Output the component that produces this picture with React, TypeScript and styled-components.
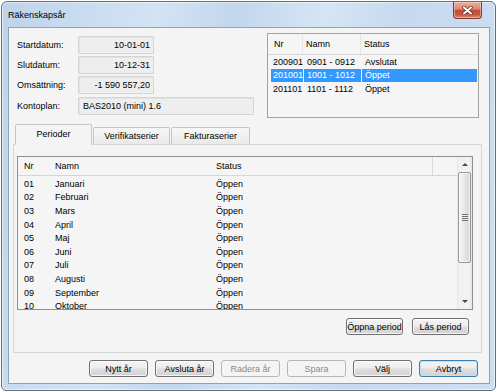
import React from "react";
import styled, { createGlobalStyle, css } from "styled-components";

const GlobalStyle = createGlobalStyle`
  html, body { margin: 0; padding: 0; background: #ffffff; }
  body {
    font-family: "Liberation Sans", Arial, sans-serif;
    font-size: 9px;
    color: #000;
  }
  * { box-sizing: border-box; }
`;

const Window = styled.div`
  margin: 1px;
  width: 495px;
  height: 390px;
  border: 1px solid #5d6f86;
  border-radius: 6px 6px 5px 5px;
  padding: 0 5px 6px 6px;
  display: flex;
  flex-direction: column;
  background: linear-gradient(100deg, #bed3ea 0%, #d3e3f4 28%, #c2d6ec 42%, #d6e5f5 58%, #c6d9ee 72%, #cddef1 100%);
  box-shadow: inset 0 0 0 1px rgba(255, 255, 255, 0.55);
`;

const TitleBar = styled.div`
  height: 25px;
  flex: none;
  display: flex;
  align-items: center;
  justify-content: space-between;
`;

const Title = styled.span`
  font-size: 9px;
  color: #000;
`;

const CloseButton = styled.div`
  align-self: flex-start;
  width: 29px;
  height: 17px;
  margin-right: 8px;
  border: 1px solid #7b3a2f;
  border-top: none;
  border-radius: 0 0 4px 4px;
  background: linear-gradient(#eab2a3 0%, #d98572 45%, #c44a33 52%, #c65a42 80%, #dc8d70 100%);
  box-shadow: inset 0 0 0 1px rgba(255, 220, 210, 0.5);
  display: flex;
  align-items: center;
  justify-content: center;
`;

const Client = styled.div`
  flex: 1;
  border: 1px solid #8ea2ba;
  background: #f4f4f4;
  display: flex;
  flex-direction: column;
  padding-top: 5px;
`;

const TopSection = styled.div`
  display: flex;
  justify-content: space-between;
  margin: 0 10px 0 8px;
  height: 85px;
`;

const Form = styled.div`
  display: flex;
  flex-direction: column;
  padding-top: 3px;
`;

const FormRow = styled.div<{ $gap: number }>`
  display: flex;
  align-items: center;
  margin-top: ${(p) => p.$gap}px;
`;

const Label = styled.span`
  width: 61px;
`;

const Field = styled.div<{ $wide?: boolean; $right?: boolean }>`
  width: ${(p) => (p.$wide ? 176 : 76)}px;
  height: 18px;
  border: 1px solid #d5d5d5;
  border-radius: 1px;
  background: #eeeeee;
  box-shadow: inset 1px 1px 0 #e2e2e2;
  display: flex;
  align-items: center;
  justify-content: ${(p) => (p.$right ? "flex-end" : "flex-start")};
  padding: 0 3px 0 4px;
`;

const YearList = styled.div`
  width: 212px;
  height: 85px;
  border: 1px solid #a3a3a3;
  background: #f5f5f5;
  display: flex;
  flex-direction: column;
`;

const YearHeader = styled.div`
  height: 21px;
  flex: none;
  border-bottom: 1px solid #d9d9d9;
  display: flex;
  padding-left: 3px;
`;

const YearCell = styled.div<{ $w?: number; $sel?: boolean; $head?: boolean }>`
  ${(p) => (p.$w ? css`width: ${p.$w}px; flex: none;` : css`flex: 1;`)}
  padding-left: 3px;
  display: flex;
  align-items: center;
  white-space: nowrap;
  ${(p) =>
    p.$head &&
    css`
      &:not(:last-child) {
        border-right: 1px solid #e6e6e6;
      }
    `}
  ${(p) =>
    p.$sel &&
    css`
      background: #3399ff;
      color: #fff;
    `}
`;

const YearRow = styled.div`
  height: 13.5px;
  display: flex;
  gap: 1px;
  padding-left: 3px;
  margin-right: 1px;
`;

const TabsRow = styled.div`
  display: flex;
  align-items: flex-end;
  gap: 1px;
  margin: 6px 0 -1px 6px;
  height: 21px;
  position: relative;
  z-index: 1;
`;

const Tab = styled.div<{ $active?: boolean; $w: number }>`
  width: ${(p) => p.$w}px;
  height: ${(p) => (p.$active ? 21 : 18)}px;
  border: 1px solid #c6c6c6;
  border-bottom: 1px solid ${(p) => (p.$active ? "#f4f4f4" : "#d6d6d6")};
  border-radius: 2px 2px 0 0;
  background: ${(p) => (p.$active ? "#f4f4f4" : "linear-gradient(#f7f7f7, #e9e9e9)")};
  display: flex;
  align-items: center;
  justify-content: center;
  padding-bottom: ${(p) => (p.$active ? 2 : 0)}px;
`;

const TabPanel = styled.div`
  margin: 0 7px 0 4px;
  height: 209px;
  border: 1px solid #d6d6d6;
  padding: 11px 8px 0 3px;
  display: flex;
  flex-direction: column;
`;

const ListView = styled.div`
  height: 154px;
  border: 1px solid #8f8f8f;
  background: #f5f5f5;
  display: flex;
`;

const ListContent = styled.div`
  flex: 1;
  overflow: hidden;
  display: flex;
  flex-direction: column;
`;

const ListHeader = styled.div`
  height: 19px;
  flex: none;
  border-bottom: 1px solid #d5d5d5;
  display: flex;
`;

const HeaderCell = styled.div<{ $w?: number; $sep?: string }>`
  ${(p) => (p.$w ? css`width: ${p.$w}px; flex: none;` : css`flex: 1;`)}
  padding-left: 6px;
  display: flex;
  align-items: center;
  border-right: 1px solid ${(p) => p.$sep ?? "transparent"};
`;

const Rows = styled.div`
  padding-top: 1px;
`;

const Row = styled.div`
  height: 13.6px;
  display: flex;
  align-items: center;
`;

const Cell = styled.div<{ $w: number }>`
  width: ${(p) => p.$w}px;
  flex: none;
  padding-left: 6px;
  white-space: nowrap;
`;

const Scrollbar = styled.div`
  width: 15px;
  flex: none;
  display: flex;
  flex-direction: column;
  background: linear-gradient(to right, #e4e4e4 0, #f2f2f2 2px, #f2f2f2 12px, #e4e4e4 15px);
`;

const ScrollArrow = styled.div<{ $down?: boolean }>`
  height: 15px;
  flex: none;
  display: flex;
  align-items: center;
  justify-content: center;
  &::after {
    content: "";
    width: 0;
    height: 0;
    border-left: 3px solid transparent;
    border-right: 3px solid transparent;
    ${(p) =>
      p.$down
        ? css`border-top: 3px solid #4a4a4a;`
        : css`border-bottom: 3px solid #4a4a4a;`}
  }
`;

const Thumb = styled.div`
  height: 91px;
  flex: none;
  margin: 0 1px;
  border: 1px solid #979797;
  border-radius: 2px;
  background: linear-gradient(to right, #f6f6f6 0%, #e8e8e8 45%, #d6d6d6 100%);
  box-shadow: inset 0 0 0 1px rgba(255, 255, 255, 0.6);
  display: flex;
  align-items: center;
  justify-content: center;
`;

const Grip = styled.div`
  width: 6px;
  height: 7px;
  background: repeating-linear-gradient(to bottom, #6e6e6e 0 1px, #f0f0f0 1px 2px);
`;

const Track = styled.div`
  flex: 1;
`;

const ButtonRow = styled.div<{ $gap: number; $top: number; $right: number }>`
  display: flex;
  justify-content: flex-end;
  gap: ${(p) => p.$gap}px;
  margin-top: ${(p) => p.$top}px;
  margin-right: ${(p) => p.$right}px;
`;

const Button = styled.button<{ $w: number; $variant?: "default" | "disabled" }>`
  width: ${(p) => p.$w}px;
  height: 17px;
  padding: 0;
  font-family: inherit;
  font-size: 9px;
  color: #000;
  border: 1px solid #707070;
  border-radius: 3px;
  background: linear-gradient(#f4f4f4 0%, #ececec 48%, #dedede 52%, #d2d2d2 100%);
  box-shadow: inset 0 0 0 1px rgba(255, 255, 255, 0.75);
  ${(p) =>
    p.$variant === "default" &&
    css`
      border-color: #3c7fb1;
      box-shadow: inset 0 0 0 1px #bfe1f7;
    `}
  ${(p) =>
    p.$variant === "disabled" &&
    css`
      border-color: #b4b8bb;
      background: #f4f4f4;
      color: #8a8a8a;
      box-shadow: none;
    `}
`;

const years = [
  { nr: "200901", namn: "0901 - 0912", status: "Avslutat" },
  { nr: "201001", namn: "1001 - 1012", status: "Öppet", sel: true },
  { nr: "201101", namn: "1101 - 1112", status: "Öppet" },
];

const periods = [
  "Januari",
  "Februari",
  "Mars",
  "April",
  "Maj",
  "Juni",
  "Juli",
  "Augusti",
  "September",
  "Oktober",
  "November",
  "December",
];

export default function App() {
  return (
    <>
      <GlobalStyle />
      <Window>
        <TitleBar>
          <Title>Räkenskapsår</Title>
          <CloseButton>
            <svg width="11" height="9" viewBox="0 0 11 9">
              <path d="M2 1.5 L9 7.5 M9 1.5 L2 7.5" stroke="#6b2a20" strokeWidth="3.4" strokeLinecap="round" />
              <path d="M2 1.5 L9 7.5 M9 1.5 L2 7.5" stroke="#ffffff" strokeWidth="2" strokeLinecap="round" />
            </svg>
          </CloseButton>
        </TitleBar>
        <Client>
          <TopSection>
            <Form>
              <FormRow $gap={0}>
                <Label>Startdatum:</Label>
                <Field $right>10-01-01</Field>
              </FormRow>
              <FormRow $gap={2}>
                <Label>Slutdatum:</Label>
                <Field $right>10-12-31</Field>
              </FormRow>
              <FormRow $gap={2}>
                <Label>Omsättning:</Label>
                <Field $right>-1 590 557,20</Field>
              </FormRow>
              <FormRow $gap={3}>
                <Label>Kontoplan:</Label>
                <Field $wide>BAS2010 (mini) 1.6</Field>
              </FormRow>
            </Form>
            <YearList>
              <YearHeader>
                <YearCell $head $w={32}>Nr</YearCell>
                <YearCell $head $w={58}>Namn</YearCell>
                <YearCell $head>Status</YearCell>
              </YearHeader>
              {years.map((y) => (
                <YearRow key={y.nr}>
                  <YearCell $w={32} $sel={y.sel} style={{ paddingLeft: 2 }}>
                    {y.nr}
                  </YearCell>
                  <YearCell $w={57} $sel={y.sel}>
                    {y.namn}
                  </YearCell>
                  <YearCell $sel={y.sel}>{y.status}</YearCell>
                </YearRow>
              ))}
            </YearList>
          </TopSection>

          <TabsRow>
            <Tab $active $w={77}>Perioder</Tab>
            <Tab $w={77}>Verifikatserier</Tab>
            <Tab $w={79}>Fakturaserier</Tab>
          </TabsRow>
          <TabPanel>
            <ListView>
              <ListContent>
                <ListHeader>
                  <HeaderCell $w={31}>Nr</HeaderCell>
                  <HeaderCell $w={161}>Namn</HeaderCell>
                  <HeaderCell $w={223} $sep="#d9d9d9">Status</HeaderCell>
                  <HeaderCell />
                </ListHeader>
                <Rows>
                  {periods.map((name, i) => (
                    <Row key={name}>
                      <Cell $w={31}>{String(i + 1).padStart(2, "0")}</Cell>
                      <Cell $w={161}>{name}</Cell>
                      <Cell $w={223}>Öppen</Cell>
                    </Row>
                  ))}
                </Rows>
              </ListContent>
              <Scrollbar>
                <ScrollArrow />
                <Thumb>
                  <Grip />
                </Thumb>
                <Track />
                <ScrollArrow $down />
              </Scrollbar>
            </ListView>
            <ButtonRow $gap={9} $top={8} $right={4}>
              <Button $w={57}>Öppna period</Button>
              <Button $w={57}>Lås period</Button>
            </ButtonRow>
          </TabPanel>

          <ButtonRow $gap={7} $top={7} $right={11}>
            <Button $w={59}>Nytt år</Button>
            <Button $w={59}>Avsluta år</Button>
            <Button $w={59} $variant="disabled">Radera år</Button>
            <Button $w={59} $variant="disabled">Spara</Button>
            <Button $w={59}>Välj</Button>
            <Button $w={59} $variant="default">Avbryt</Button>
          </ButtonRow>
        </Client>
      </Window>
    </>
  );
}
